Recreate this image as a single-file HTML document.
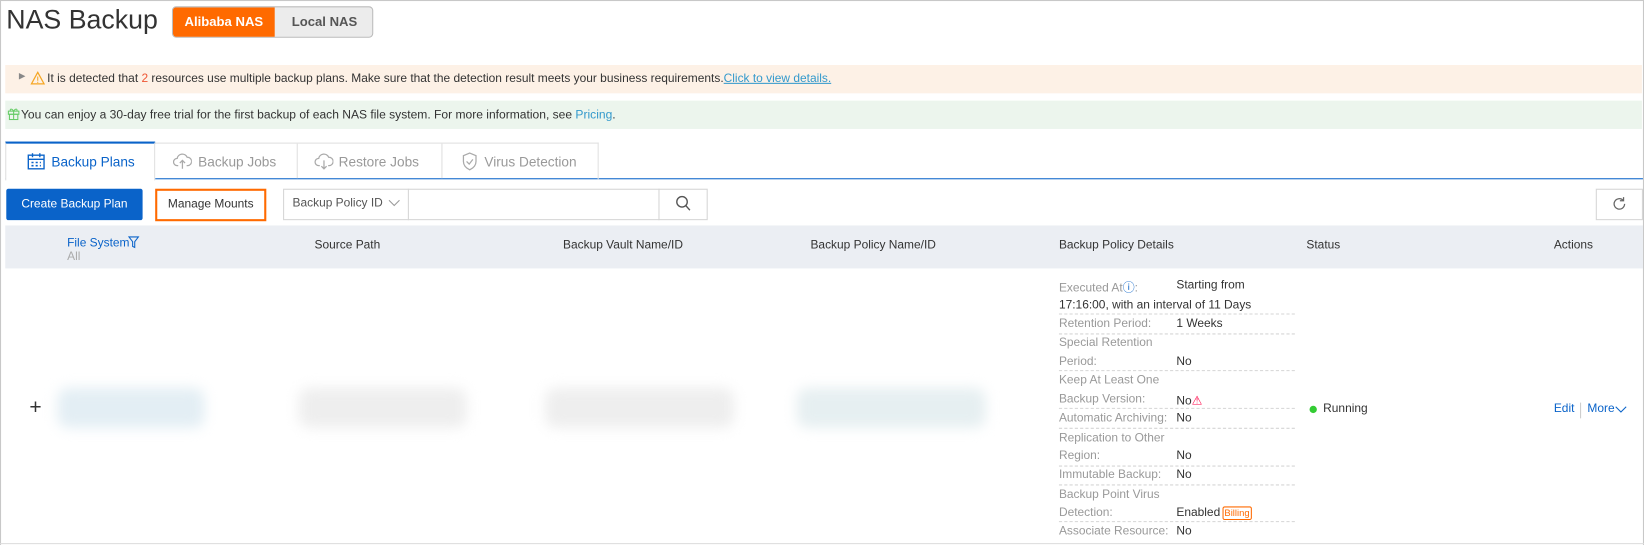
<!DOCTYPE html>
<html><head><meta charset="utf-8"><style>
*{box-sizing:border-box;margin:0;padding:0}
html,body{width:1644px;height:545px;overflow:hidden;background:#fff}
body{font-family:"Liberation Sans",sans-serif;font-size:11.4px;color:#333;position:relative}
#w{position:absolute;left:0;top:0;width:1568px;height:520px;transform:scale(1.04847);transform-origin:0 0}
.frame{position:absolute;left:0;top:0;width:1568px;height:520px;border:1px solid #c8c8c8;border-bottom:none}
.abs{position:absolute;white-space:nowrap}
.blob{position:absolute;height:38px;top:370px;border-radius:10px;filter:blur(6px)}
.k{color:#999}
.dl{position:absolute;left:1010px;width:225px;border-top:1px dashed #d5d5d5}
</style></head><body><div id="w">
<div class="frame"></div>
<div class="abs" style="left:6px;top:5px;font-size:25.5px;color:#333">NAS Backup</div>
<div class="abs" style="left:164px;top:6px;width:192px;height:30px;border:1px solid #bbb;border-radius:4px;background:#ececec;overflow:hidden">
 <div style="position:absolute;left:0;top:0;width:97px;height:30px;background:#ff6a00;color:#fff;font-weight:bold;font-size:12.5px;line-height:28px;text-align:center">Alibaba NAS</div>
 <div style="position:absolute;left:97px;top:0;width:95px;line-height:28px;text-align:center;font-weight:bold;font-size:12.5px;color:#555">Local NAS</div>
</div>
<div class="abs" style="left:5px;top:62px;width:1561px;height:27px;background:#fdf1e6"></div>
<div class="abs" style="left:18px;top:68px;font-size:8px;color:#888">▶</div>
<svg class="abs" style="left:29px;top:68px" width="14" height="13" viewBox="0 0 14 13"><path d="M7 1L13 12H1Z" fill="none" stroke="#f5a623" stroke-width="1.2"/><path d="M7 5v4M7 10v1" stroke="#f5a623"/></svg>
<div class="abs" style="left:45px;top:69px;font-size:11.4px">It is detected that <span style="color:#e53">2</span> resources use multiple backup plans. Make sure that the detection result meets your business requirements.<span style="color:#39c;text-decoration:underline">Click to view details.</span></div>
<div class="abs" style="left:5px;top:96px;width:1561px;height:27px;background:#ecf5ed"></div>
<svg class="abs" style="left:7px;top:102px" width="12" height="13" viewBox="0 0 12 13"><rect x="1" y="4" width="10" height="3" fill="none" stroke="#6c6"/><rect x="2" y="7" width="8" height="5" fill="none" stroke="#6c6"/><path d="M6 4v8M6 4C4 1 2 2 3 4M6 4C8 1 10 2 9 4" fill="none" stroke="#6c6"/></svg>
<div class="abs" style="left:20px;top:104px;font-size:11.5px">You can enjoy a 30-day free trial for the first backup of each NAS file system. For more information, see <span style="color:#39c">Pricing</span>.</div>
<div class="abs" style="left:5px;top:170px;width:1562px;border-top:1px solid #0a63c9"></div>
<div class="abs" style="left:5px;top:136px;width:566px;height:35px;border:1px solid #e0e0e0;border-bottom:none"></div>
<div class="abs" style="left:5px;top:135px;width:143px;height:37px;background:#fff;border:1px solid #e0e0e0;border-top:2px solid #0a63c9;border-bottom:none"></div>
<div class="abs" style="left:283px;top:137px;height:33px;border-left:1px solid #e0e0e0"></div>
<div class="abs" style="left:421px;top:137px;height:33px;border-left:1px solid #e0e0e0"></div>
<svg class="abs" style="left:26px;top:146px" width="17" height="16" viewBox="0 0 17 16"><rect x="1" y="2" width="15" height="13" fill="none" stroke="#0a63c9" stroke-width="1.3"/><path d="M1 6h15M5 0v4M12 0v4" stroke="#0a63c9" stroke-width="1.3"/><path d="M4 9h2M8 9h2M12 9h1M4 12h2M8 12h2M12 12h1" stroke="#0a63c9" stroke-width="1.5"/></svg>
<div class="abs" style="left:49px;top:147px;font-size:13px;color:#0a63c9">Backup Plans</div>
<svg class="abs" style="left:165px;top:146px" width="18" height="16" viewBox="0 0 18 16"><path d="M5 12H4a3.5 3.5 0 010-7 5 5 0 019.5-1A3.5 3.5 0 0114 12h-1M9 7v8M6.5 9.5L9 7l2.5 2.5" fill="none" stroke="#aaa" stroke-width="1.2"/></svg>
<div class="abs" style="left:189px;top:147px;font-size:13px;color:#999">Backup Jobs</div>
<svg class="abs" style="left:300px;top:146px" width="18" height="16" viewBox="0 0 18 16"><path d="M5 12H4a3.5 3.5 0 010-7 5 5 0 019.5-1A3.5 3.5 0 0114 12h-1M9 7v8M6.5 12.5L9 15l2.5-2.5" fill="none" stroke="#aaa" stroke-width="1.2"/></svg>
<div class="abs" style="left:323px;top:147px;font-size:13px;color:#999">Restore Jobs</div>
<svg class="abs" style="left:440px;top:145px" width="16" height="18" viewBox="0 0 16 18"><path d="M8 1L14 3.5V9c0 4-3 6.5-6 8-3-1.5-6-4-6-8V3.5Z" fill="none" stroke="#aaa" stroke-width="1.2"/><path d="M5 9l2.5 2.5L11 7" fill="none" stroke="#aaa" stroke-width="1.2"/></svg>
<div class="abs" style="left:462px;top:147px;font-size:13px;color:#999">Virus Detection</div>
<div class="abs" style="left:6px;top:180px;width:130px;height:30px;background:#0a63c9;border-radius:2px;color:#fff;line-height:30px;text-align:center">Create Backup Plan</div>
<div class="abs" style="left:148px;top:180px;width:106px;height:31px;border:2px solid #ff6a00;line-height:27px;text-align:center;color:#333">Manage Mounts</div>
<div class="abs" style="left:270px;top:180px;width:405px;height:30px;border:1px solid #d5d5d5"></div>
<div class="abs" style="left:389px;top:180px;height:30px;border-left:1px solid #d5d5d5"></div>
<div class="abs" style="left:628px;top:180px;height:30px;border-left:1px solid #d5d5d5"></div>
<div class="abs" style="left:279px;top:188px;color:#555">Backup Policy ID</div>
<svg class="abs" style="left:370px;top:190px" width="12" height="8"><path d="M1 1l5 5 5-5" fill="none" stroke="#999"/></svg>
<svg class="abs" style="left:644px;top:186px" width="15" height="16"><circle cx="6.5" cy="6.5" r="5" fill="none" stroke="#555" stroke-width="1.3"/><path d="M10 10l4 4.5" stroke="#555" stroke-width="1.3"/></svg>
<div class="abs" style="left:1522px;top:180px;width:45px;height:30px;border:1px solid #d5d5d5"></div>
<svg class="abs" style="left:1537px;top:187px" width="15" height="15" viewBox="0 0 15 15"><path d="M12.5 7.5a5 5 0 11-1.5-3.6M11.5 1v3.5H8" fill="none" stroke="#666" stroke-width="1.2"/></svg>
<div class="abs" style="left:5px;top:215px;width:1562px;height:41px;background:#ebeef3"></div>
<div class="abs" style="left:64px;top:226px;color:#0a63c9">File System</div>
<svg class="abs" style="left:122px;top:225px" width="11" height="12"><path d="M1 1h9L6.5 5.5V11L4.5 10V5.5Z" fill="none" stroke="#0a63c9"/></svg>
<div class="abs" style="left:64px;top:239px;color:#aaa">All</div>
<div class="abs" style="left:300px;top:228px">Source Path</div>
<div class="abs" style="left:537px;top:228px">Backup Vault Name/ID</div>
<div class="abs" style="left:773px;top:228px">Backup Policy Name/ID</div>
<div class="abs" style="left:1010px;top:228px">Backup Policy Details</div>
<div class="abs" style="left:1246px;top:228px">Status</div>
<div class="abs" style="left:1482px;top:228px">Actions</div>
<div class="abs" style="left:28px;top:378px;font-size:20px;color:#333">+</div>
<div class="blob" style="left:55px;width:140px;background:#e3eef4"></div>
<div class="blob" style="left:285px;width:160px;background:#eee"></div>
<div class="blob" style="left:520px;width:180px;background:#eee"></div>
<div class="blob" style="left:760px;width:180px;background:#e6eff1"></div>
<div class="abs k" style="left:1010px;top:266px">Executed At<span style="color:#0a63c9">ⓘ</span>:</div><div class="abs" style="left:1122px;top:266px">Starting from</div>
<div class="abs" style="left:1010px;top:285px">17:16:00, with an interval of 11 Days</div>
<div class="dl" style="top:299px"></div>
<div class="abs k" style="left:1010px;top:303px">Retention Period:</div><div class="abs" style="left:1122px;top:303px">1 Weeks</div>
<div class="dl" style="top:318px"></div>
<div class="abs k" style="left:1010px;top:321px">Special Retention</div>
<div class="abs k" style="left:1010px;top:339px">Period:</div><div class="abs" style="left:1122px;top:339px">No</div>
<div class="dl" style="top:353px"></div>
<div class="abs k" style="left:1010px;top:357px">Keep At Least One</div>
<div class="abs k" style="left:1010px;top:375px">Backup Version:</div><div class="abs" style="left:1122px;top:375px">No<span style="color:#f04">⚠</span></div>
<div class="dl" style="top:389px"></div>
<div class="abs k" style="left:1010px;top:393px">Automatic Archiving:</div><div class="abs" style="left:1122px;top:393px">No</div>
<div class="dl" style="top:408px"></div>
<div class="abs k" style="left:1010px;top:412px">Replication to Other</div>
<div class="abs k" style="left:1010px;top:429px">Region:</div><div class="abs" style="left:1122px;top:429px">No</div>
<div class="dl" style="top:444px"></div>
<div class="abs k" style="left:1010px;top:447px">Immutable Backup:</div><div class="abs" style="left:1122px;top:447px">No</div>
<div class="dl" style="top:462px"></div>
<div class="abs k" style="left:1010px;top:466px">Backup Point Virus</div>
<div class="abs k" style="left:1010px;top:483px">Detection:</div><div class="abs" style="left:1122px;top:483px">Enabled<span style="display:inline-block;border:1px solid #ff6a00;color:#ff6a00;font-size:9px;border-radius:2px;padding:0 1px;margin-left:2px;line-height:11px">Billing</span></div>
<div class="dl" style="top:497px"></div>
<div class="abs k" style="left:1010px;top:501px">Associate Resource:</div><div class="abs" style="left:1122px;top:501px">No</div>
<div class="abs" style="left:1249px;top:387px;width:7px;height:7px;border-radius:50%;background:#3c3"></div>
<div class="abs" style="left:1262px;top:384px">Running</div>
<div class="abs" style="left:1482px;top:384px;color:#0a63c9">Edit</div>
<div class="abs" style="left:1507px;top:384px;height:15px;border-left:1px solid #ccc"></div>
<div class="abs" style="left:1514px;top:384px;color:#0a63c9">More</div>
<svg class="abs" style="left:1540px;top:387px" width="12" height="8"><path d="M1 1l5 5 5-5" fill="none" stroke="#0a63c9"/></svg>
<div class="abs" style="left:0;top:518px;width:1568px;border-top:1px solid #ddd"></div>
</div></body></html>
